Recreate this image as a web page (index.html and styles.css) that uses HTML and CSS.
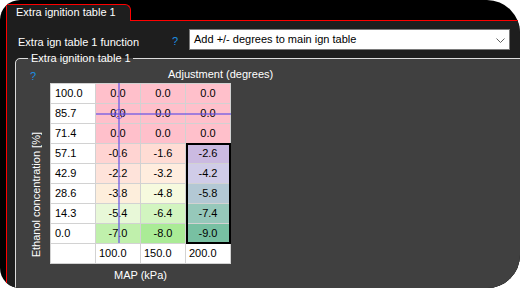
FILE: index.html
```html
<!DOCTYPE html>
<html>
<head>
<meta charset="utf-8">
<link rel="stylesheet" href="styles.css">
</head>
<body>
<div class="frame">
  <div class="tabstrip"><div class="tab">Extra ignition table 1</div></div>
  <div class="panel">
    <div class="fn-row">
      <span class="fn-label">Extra ign table 1 function</span>
      <span class="help help-top">?</span>
      <div class="combo">
        <span class="combo-text">Add +/- degrees to main ign table</span>
        <svg class="chev" width="9" height="5" viewBox="0 0 9 5"><polyline points="0.5,0.5 4.5,4.5 8.5,0.5" fill="none" stroke="#606060" stroke-width="1"/></svg>
      </div>
    </div>
    <fieldset class="group">
      <legend>Extra ignition table 1</legend>
      <div class="gb-body">
        <span class="help help-grid">?</span>
        <span class="z-title">Adjustment (degrees)</span>
        <div class="y-title"><span>Ethanol concentration [%]</span></div>
        <div class="table-wrap">
          <table class="map">
            <tr><td class="lbl">100.0</td><td style="background:#ffc0cb">0.0</td><td style="background:#ffc0cb">0.0</td><td style="background:#ffc0cb">0.0</td></tr>
            <tr><td class="lbl">85.7</td><td style="background:#ffc0cb">0.0</td><td style="background:#ffc0cb">0.0</td><td style="background:#ffc0cb">0.0</td></tr>
            <tr><td class="lbl">71.4</td><td style="background:#ffc0cb">0.0</td><td style="background:#ffc0cb">0.0</td><td style="background:#ffc0cb">0.0</td></tr>
            <tr><td class="lbl">57.1</td><td style="background:#ffd4d2">-0.6</td><td style="background:#ffdcd4">-1.6</td><td style="background:#cbbae1">-2.6</td></tr>
            <tr><td class="lbl">42.9</td><td style="background:#fee3da">-2.2</td><td style="background:#ffedde">-3.2</td><td style="background:#d0cce8">-4.2</td></tr>
            <tr><td class="lbl">28.6</td><td style="background:#fdeedc">-3.8</td><td style="background:#f6fade">-4.8</td><td style="background:#b3c8d4">-5.8</td></tr>
            <tr><td class="lbl">14.3</td><td style="background:#e8f8d8">-5.4</td><td style="background:#d2f5c0">-6.4</td><td style="background:#96c8ba">-7.4</td></tr>
            <tr><td class="lbl">0.0</td><td style="background:#c0f0ac">-7.0</td><td style="background:#aaeb96">-8.0</td><td style="background:#78c0a2">-9.0</td></tr>
            <tr><td class="lbl"></td><td class="xax">100.0</td><td class="xax">150.0</td><td class="xax">200.0</td></tr>
          </table>
          <div class="sel"></div>
          <div class="cross-v"></div>
          <div class="cross-h"></div>
          <div class="cross-dot"></div>
        </div>
        <span class="x-title">MAP (kPa)</span>
      </div>
    </fieldset>
  </div>
</div>
</body>
</html>
```
FILE: styles.css
```css
html, body {
  margin: 0;
  padding: 0;
  background: #ffffff;
}
body {
  font-family: "Liberation Sans", Arial, sans-serif;
  font-size: 11px;
  line-height: 13px;
}
.frame {
  width: 520px;
  height: 288px;
  overflow: hidden;
  background: #000000;
  border-radius: 20px 33px 33px 20px;
  color: #ffffff;
}
.tabstrip {
  height: 21px;
  box-sizing: border-box;
  padding: 4px 0 0 6px;
}
.tab {
  position: relative;
  z-index: 1;
  width: 125px;
  height: 17px;
  box-sizing: border-box;
  border: 1px solid #ff0000;
  border-bottom: 0;
  border-top-right-radius: 6px;
  background: #1e1e1e;
  padding: 1px 0 0 9px;
  white-space: nowrap;
}
.panel {
  margin: -1px 0 0 6px;
  height: 270px;
  border-top: 1px solid #ff0000;
  border-left: 1px solid #ff0000;
  background: #1e1e1e;
}
.fn-row {
  display: flex;
  align-items: flex-start;
  padding: 8px 0 0 11px;
}
.fn-label {
  width: 154px;
  margin-top: 7px;
  white-space: nowrap;
}
.help {
  color: #1c8fe3;
}
.help-top {
  width: 17px;
  margin-top: 6px;
}
.combo {
  width: 321px;
  height: 21px;
  box-sizing: border-box;
  border: 1px solid #7a7a7a;
  background: #ffffff;
  color: #000000;
  display: flex;
  align-items: center;
  padding: 0 4px 0 4px;
}
.combo-text {
  flex: 1;
  white-space: nowrap;
}
.chev {
  display: block;
  margin-top: 1px;
}
.group {
  margin: 2px 0 0 8px;
  padding: 0;
  width: 560px;
  height: 260px;
  border: 1px solid #dcdcdc;
  border-top-left-radius: 5px;
  background: #404040;
  min-width: 0;
}
.group legend {
  margin-left: 12px;
  padding: 0 2px 0 3px;
  line-height: 13px;
  white-space: nowrap;
}
.gb-body {
  display: grid;
  grid-template-columns: 24px 181px;
  grid-template-rows: 13px auto auto;
  padding: 3px 0 0 10px;
}
.help-grid {
  grid-column: 1;
  grid-row: 1;
  padding-left: 4px;
  margin-top: 2px;
}
.z-title {
  grid-column: 2;
  grid-row: 1;
  margin-left: 118px;
  white-space: nowrap;
}
.y-title {
  grid-column: 1;
  grid-row: 2;
  display: flex;
  align-items: flex-end;
  padding: 0 0 7px 4px;
  margin-top: 2px;
}
.y-title span {
  writing-mode: vertical-rl;
  transform: rotate(180deg);
  white-space: nowrap;
}
.table-wrap {
  grid-column: 2;
  grid-row: 2;
  position: relative;
  margin-top: 2px;
}
.map {
  border-collapse: collapse;
  color: #000000;
}
.map td {
  width: 44px;
  height: 19px;
  padding: 0;
  border: 1px solid #d2d2d2;
  text-align: center;
  white-space: nowrap;
  box-sizing: content-box;
}
.map td.lbl {
  background: #ffffff;
  text-align: left;
  padding-left: 4px;
  width: 40px;
}
.map td.xax {
  background: #ffffff;
  text-align: left;
  padding-left: 3px;
  width: 41px;
}
.sel {
  position: absolute;
  left: 136px;
  top: 60px;
  width: 45px;
  height: 101px;
  box-sizing: border-box;
  border: 2px solid #000000;
}
.cross-v {
  position: absolute;
  left: 68px;
  top: 0;
  width: 2px;
  height: 160px;
  background: rgba(100, 80, 230, 0.6);
}
.cross-h {
  position: absolute;
  left: 46px;
  top: 30px;
  width: 135px;
  height: 2px;
  background: rgba(100, 80, 230, 0.6);
}
.cross-dot {
  position: absolute;
  left: 64px;
  top: 26px;
  width: 10px;
  height: 10px;
  box-sizing: border-box;
  border: 1.5px solid rgba(100, 80, 230, 0.8);
  border-radius: 50%;
}
.x-title {
  grid-column: 2;
  grid-row: 3;
  text-align: center;
  margin-top: 5px;
}
```
